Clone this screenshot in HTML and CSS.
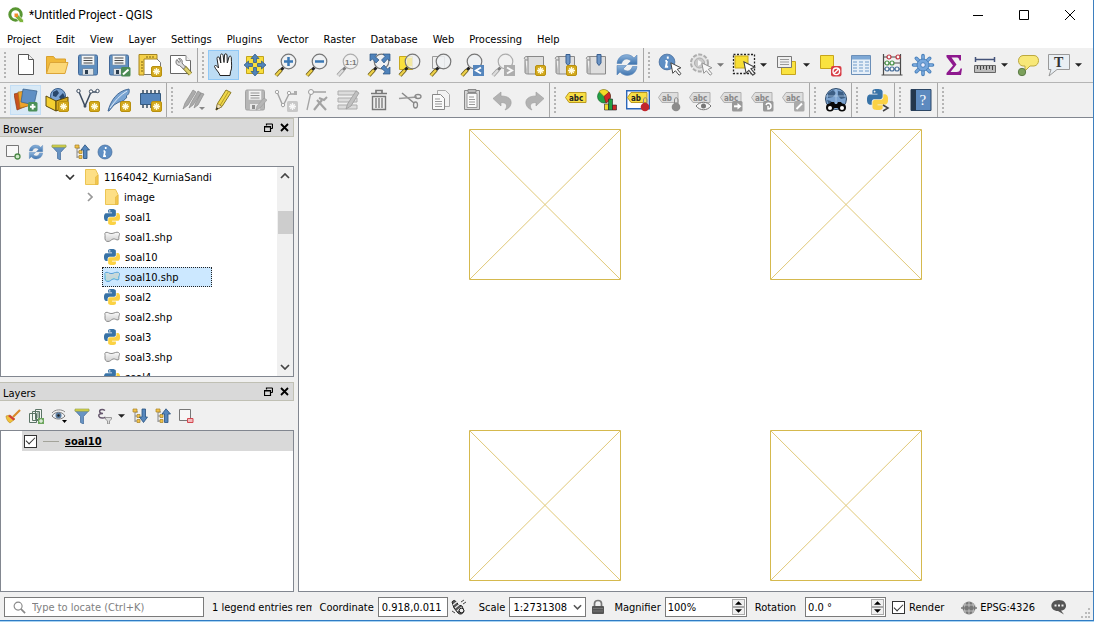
FILE: index.html
```html
<!DOCTYPE html>
<html lang="en">
<head>
<meta charset="utf-8">
<title>*Untitled Project - QGIS</title>
<link rel="stylesheet" href="styles.css">
</head>
<body>
<svg class="sprite" aria-hidden="true">
  <defs>
    <linearGradient id="g-blue" x1="0" y1="0" x2="0" y2="1"><stop offset="0" stop-color="#8db4dc"/><stop offset="1" stop-color="#3f74ae"/></linearGradient>
    <linearGradient id="g-shp" x1="0" y1="0" x2="0" y2="1"><stop offset="0" stop-color="#fafafa"/><stop offset="1" stop-color="#cfcfcf"/></linearGradient>
  </defs>
  <symbol id="b-new" viewBox="0 0 11 11"><rect x=".5" y=".5" width="10" height="10" rx="1.5" fill="#d3a91d" stroke="#b8900f"/><path d="M5.500 2v7M2 5.500h7M3.200 3.200l4.600 4.600M7.800 3.200l-4.600 4.600" stroke="#fffbe0" stroke-width="1.300"/></symbol>
  <symbol id="b-off" viewBox="0 0 11 11"><rect width="11" height="11" rx="1.500" fill="#a9a9a9"/><path d="M5.500 2v7M2 5.500h7M3.200 3.200l4.600 4.600M7.800 3.200l-4.600 4.600" stroke="#fff" stroke-width="1.300"/></symbol>
  <symbol id="lens" viewBox="0 0 24 24"><path d="M9.500 14.500 6 18" stroke="#222" stroke-width="3"/><path d="M7 17l-5 5.500" stroke="#6b5b1a" stroke-width="4"/><path d="M7 17l-5 5.500" stroke="#ecd04a" stroke-width="2.400"/><circle cx="14.500" cy="8.500" r="7.300" fill="#eef1f3" fill-opacity=".85" stroke="#777" stroke-width="1.200"/></symbol>
  <symbol id="floppy" viewBox="0 0 24 24"><rect x="2.500" y="2" width="19" height="20" rx="1.500" fill="#5f8fc0" stroke="#41689a"/><path d="M5.500 2.500h13V12h-13z" fill="#f3f5f6" stroke="#7a8ea3" stroke-width=".6"/><path d="M7.500 5h9M7.500 7.500h9M7.500 10h9" stroke="#444"/><path d="M6.500 15.500h11v6.500h-11z" fill="#dfe3e6" stroke="#54708f" stroke-width=".6"/><path d="M9 17h3v4H9z" fill="#2c3e50"/></symbol>
  <symbol id="roll" viewBox="0 0 24 24"><path d="M4.500 3.500c-2.500 0-3 3-.5 3.500h2v14h15.500V3.500z" fill="#dedede" stroke="#888"/><path d="M6 7V5c0-1-.7-1.500-1.500-1.500M3 7v12.500c0 1.500 3 1.500 3 1.500" fill="#c2c2c2" stroke="#888"/></symbol>
  <symbol id="mark" viewBox="0 0 6 12"><path d="M1 .5h4v8.500l-2 2.500-2-2.500z" fill="#6b94c4" stroke="#385f91"/></symbol>
  <symbol id="pointer" viewBox="0 0 12 14"><path d="M.8.8l2 10.500 2.600-2.600 3.700 4.500 1.900-1.500-3.700-4.400 3.600-1.500z" fill="#fff" stroke="#444"/></symbol>
  <symbol id="python" viewBox="0 0 24 24"><path fill="#3873a7" d="M14.250.18l.9.2.73.26.59.3.45.32.34.34.25.34.16.33.1.3.04.26.02.2-.01.13V8.500l-.05.63-.13.55-.21.46-.26.38-.3.31-.33.25-.35.19-.35.14-.33.1-.3.07-.26.04-.21.02H8.770l-.69.05-.59.14-.5.22-.41.27-.33.32-.27.35-.2.36-.15.37-.1.35-.07.32-.04.27-.02.21v3.060H3.170l-.21-.03-.28-.07-.32-.12-.35-.18-.36-.26-.36-.36-.35-.46-.32-.59-.28-.73-.21-.88-.14-1.050-.05-1.230.06-1.220.16-1.040.24-.87.32-.71.36-.57.4-.44.42-.33.42-.24.4-.16.36-.1.32-.05.24-.01h.16l.06.01h8.160v-.83H6.180l-.01-2.750-.02-.37.05-.34.11-.31.17-.28.25-.26.31-.23.38-.2.44-.18.51-.15.58-.12.64-.1.71-.06.77-.04.84-.02 1.270.05zm-6.300 1.980l-.23.33-.08.41.08.41.23.34.33.22.41.09.41-.09.33-.22.23-.34.08-.41-.08-.41-.23-.33-.33-.22-.41-.09-.41.09z"/><path fill="#fbd244" d="M21.100 6.110l.28.06.32.12.35.18.36.27.36.35.35.47.32.59.28.73.21.88.14 1.040.05 1.230-.06 1.230-.16 1.040-.24.86-.32.71-.36.57-.4.45-.42.33-.42.24-.4.16-.36.09-.32.05-.24.02-.16-.01h-8.220v.82h5.840l.01 2.760.02.36-.05.34-.11.31-.17.29-.25.25-.31.24-.38.2-.44.17-.51.15-.58.13-.64.09-.71.07-.77.04-.84.01-1.270-.04-1.070-.14-.9-.2-.73-.25-.59-.3-.45-.33-.34-.34-.25-.34-.16-.33-.1-.3-.04-.25-.02-.2.01-.13v-5.340l.05-.64.13-.54.21-.46.26-.38.3-.32.33-.24.35-.2.35-.14.33-.1.3-.06.26-.04.21-.02.13-.01h5.840l.69-.05.59-.14.5-.21.41-.28.33-.32.27-.35.2-.36.15-.36.1-.35.07-.32.04-.28.02-.21V6.070h2.090l.14.01z"/></symbol>
  <symbol id="shp" viewBox="0 0 16 12"><path d="M1.500 1.500C4 .5 5 3 8 2.500S12.500.5 14.500 1.500s.5 3 .3 4.500.7 2.500-.8 2.900-3-1.500-5-.9-2.500 2.500-5 2.500S.7 8.500 1 6 .3 2.500 1.500 1.500z" fill="url(#g-shp)" stroke="#8c8c8c"/></symbol>
  <symbol id="folder" viewBox="0 0 14 16"><path d="M.5.5h10l2.500 5v10H.5z" fill="#fddf85" stroke="#ecc552"/><path d="M10.500 15.500V8l2.500-2v9.500z" fill="#f2c64d" stroke="#e2b63e" stroke-width=".6"/></symbol>
  <symbol id="refresh" viewBox="0 0 24 24"><path d="M2 10.500C3 1 14-1 19 5l3-3v9.500h-9.500L16 8C12 4.500 8 6 6.500 10.500z" fill="url(#g-blue)" stroke="#5a86b8" stroke-width=".6"/><path d="M22 13.500C21 23 10 25 5 19l-3 3v-9.500h9.500L8 16c4 3.500 8 2 9.500-2.500z" fill="url(#g-blue)" stroke="#5a86b8" stroke-width=".6"/></symbol>
  <symbol id="funnel" viewBox="0 0 16 16"><path d="M1 2.500h14l-5.500 6V16l-3-1.500v-6z" fill="#6793c3" stroke="#41689a" stroke-width=".7"/><path d="M1 1h14v2.200H1z" fill="#d8d44e" stroke="#8d9a3e" stroke-width=".6"/></symbol>
  <symbol id="tree-up" viewBox="0 0 16 16"><path d="M3 2v12M3 4h3M3 8h3M3 13h3" stroke="#888" fill="none"/><path d="M1 1h4v3H1zM5 6.500h3v3H5zM5 11.500h3v3H5z" fill="#f2c24b" stroke="#a88224" stroke-width=".7"/><path d="M11 .8 15.500 6H13v8.500H9.500V6H7z" fill="#5687bd" stroke="#27517f" stroke-width=".8"/></symbol>
  <symbol id="tree-down" viewBox="0 0 16 16"><path d="M3 2v12M3 4h3M3 8h3M3 13h3" stroke="#888" fill="none"/><path d="M1 1h4v3H1zM5 6.500h3v3H5zM5 11.500h3v3H5z" fill="#f2c24b" stroke="#a88224" stroke-width=".7"/><path d="M11.500 14.500 15.500 9H13.500V1H10v8H7.500z" fill="#5687bd" stroke="#27517f" stroke-width=".8"/></symbol>
  <symbol id="info" viewBox="0 0 16 16"><circle cx="8" cy="8" r="7" fill="#5f8fc4" stroke="#41689a" stroke-width=".7"/><path d="M8.700 3v2M8 7l-1 5.200h2M6.500 7H8" stroke="#fff" stroke-width="1.700" fill="none"/></symbol>
  <symbol id="tag" viewBox="0 0 24 24"><path d="M1.500 7.500 5 2.500h17v10H5z" class="tag-shape"/><text x="5" y="10.500" class="tag-text">abc</text></symbol>
  <symbol id="tagab" viewBox="0 0 24 24"><path d="M1.500 7.500 5 2.500h16v10H5z" class="tag-shape"/><text x="5" y="10.500" class="tag-text">ab</text></symbol>
  <symbol id="pin" viewBox="0 0 10 16"><path d="M3.500 8V4c0-3 3.500-3 3.500 0v4" fill="none" stroke="#888"/><circle cx="5" cy="11" r="4.300" fill="currentColor"/></symbol>
  <symbol id="undo" viewBox="0 0 24 24"><path d="M2 10.500 10 4v4c7 0 11 3 10 8-.7 3-3 5-6 6 3-4 2-7.500-4-7.500V18z" fill="#b2b2b2" stroke="#9c9c9c" stroke-width=".6"/></symbol>
  <symbol id="float" viewBox="0 0 9 9"><path d="M2.500 1h6M2.500 .5v2M8.500 1v4.500M6.500 5.500h2M.5 3.500h6v5H.5zM.5 4h6" fill="none" stroke="#000" stroke-width="1.200"/></symbol>
  <symbol id="x" viewBox="0 0 9 9"><path d="M1 1l7 7M8 1 1 8" stroke="#000" stroke-width="1.800"/></symbol>
  <symbol id="chev" viewBox="0 0 10 6"><path d="M1 1l4 4 4-4" fill="none" stroke="currentColor" stroke-width="1.700"/></symbol>
  <symbol id="tri" viewBox="0 0 8 4"><path d="M0 0h8L4 4z" fill="currentColor"/></symbol>
</svg>

<div class="window">
  <header class="titlebar">
    <svg class="logo" viewBox="0 0 16 16"><circle cx="7.500" cy="7.500" r="5.700" fill="none" stroke="#589632" stroke-width="3"/><path d="M7.500 7.500h2.500l5.500 5.500v2.500H12L7.500 10.500z" fill="#7db53c" stroke="#fff" stroke-width=".7"/><path d="M6.500 6.500h3.500v3.500H6.500z" fill="#ee8f2b"/></svg>
    <h1>*Untitled Project - QGIS</h1>
    <div class="winbtns">
      <button aria-label="Minimize"><svg viewBox="0 0 12 12"><path d="M1 6.500h10" stroke="#000"/></svg></button>
      <button aria-label="Maximize"><svg viewBox="0 0 12 12"><path d="M1.500 1.500h9v9h-9z" fill="none" stroke="#000"/></svg></button>
      <button aria-label="Close"><svg viewBox="0 0 12 12"><path d="M1 1l10 10M11 1 1 11" stroke="#000"/></svg></button>
    </div>
  </header>
  <nav class="menubar">
    <button>Project</button><button>Edit</button><button>View</button><button>Layer</button><button>Settings</button><button>Plugins</button><button>Vector</button><button>Raster</button><button>Database</button><button>Web</button><button>Processing</button><button>Help</button>
  </nav>

  <div class="toolrow">
    <div class="group">
      <button aria-label="New project"><svg viewBox="0 0 24 24"><path d="M4.500 1.500h10l5 5v15h-15z" fill="#fff" stroke="#555"/><path d="M14.500 1.500v5h5" fill="#eee" stroke="#555"/></svg></button>
      <button aria-label="Open"><svg viewBox="0 0 24 24"><path d="M1.500 20.500v-17h7l2 2.500h10v4" fill="#f0b93a" stroke="#d9a02e"/><path d="M1.500 20.500 5 9.500h18l-3 11z" fill="#fcd878" stroke="#dca538"/></svg></button>
      <button aria-label="Save"><svg viewBox="0 0 24 24"><use href="#floppy"/></svg></button>
      <button aria-label="Save as"><svg viewBox="0 0 24 24"><use href="#floppy"/><rect x="14" y="14" width="9.500" height="9.500" rx="1.500" fill="#4b8a54"/><path d="M16 21.500l5.500-5" stroke="#fff" stroke-width="2"/></svg></button>
      <button aria-label="New print layout"><svg viewBox="0 0 24 24"><path d="M4.500 4.500h13l5 5v12h-18z" fill="#fff" stroke="#777"/><path d="M1 1.500h18v4.500H6v16H1z" fill="#f4d04a" stroke="#a58420"/><path d="M9 3v2M12 3v2M15 3v2M3 9h2M3 12h2M3 15h2M3 18h2" stroke="#7c6210"/><use href="#b-new" x="13" y="13" width="11" height="11"/></svg></button>
      <button aria-label="Layout manager"><svg viewBox="0 0 24 24"><path d="M1.500 2.500h15l5 5v13h-20z" fill="#fff" stroke="#666"/><path d="M17 2.500v5h5" fill="#eee" stroke="#888"/><path d="M15 14l6.500 7" stroke="#7d7225" stroke-width="4.500"/><path d="M15 14l6.500 7" stroke="#ddd06c" stroke-width="2.800"/><path d="M8 6.500c-2 2-1 6 2.500 6l4 3.500 2-2-3.500-4c1-3-1.500-5-3.500-4.500l2 2.500-1.500 1.500z" fill="#ddd" stroke="#555" stroke-width=".8"/></svg></button>
    </div>
    <div class="group">
      <button class="on" aria-label="Pan map"><svg viewBox="0 0 24 24"><path d="M8 22.500c-.5-3-4.500-6-5.500-9 0-1.500 2-1.500 4 1.500L5 5.500C4.800 3.500 7 3.200 7.500 5l1.300 5L8.500 2.500c0-2 2.300-2 2.600 0l.9 7L12.500 2c.2-1.700 2.300-1.600 2.500 0l.3 8L17 4c.5-1.500 2.500-1 2.300.8-.1 4 1.200 11-.8 14l-.5 3.700z" fill="#fff" stroke="#222"/></svg></button>
      <button aria-label="Pan to selection"><svg viewBox="0 0 24 24"><path d="M3.500 3.500h17v17h-17z" fill="#f9de3c" stroke="#c2a41c"/><path d="M12 1l4 4.500h-2.500v4h-3v-4H8zM12 23l4-4.500h-2.500v-4h-3v4H8zM1 12l4.500-4v2.500h4v3h-4V16zM23 12l-4.500-4v2.500h-4v3h4V16z" fill="#4f83bb" stroke="#2d5582" stroke-width=".7"/></svg></button>
      <button aria-label="Zoom in"><svg viewBox="0 0 24 24"><use href="#lens"/><path d="M14.500 4v9M10 8.500h9" stroke="#3b78b5" stroke-width="2.500"/></svg></button>
      <button aria-label="Zoom out"><svg viewBox="0 0 24 24"><use href="#lens"/><path d="M10 8.500h9" stroke="#3b78b5" stroke-width="2.500"/></svg></button>
      <button aria-label="Zoom to native resolution" disabled><svg viewBox="0 0 24 24"><g class="off"><use href="#lens"/></g><text x="9" y="11.500" class="ratio">1:1</text></svg></button>
      <button aria-label="Zoom full"><svg viewBox="0 0 24 24"><use href="#lens"/><path d="M3 1h7L8 3.500l4 3.500-3 3-3.500-4L3 8zM23 1h-7l2 2.500L14.500 7l2.500 3 3.500-4L23 8zM23 21h-7l2-2.500-4-3.500 3-3 3.500 4 2.500-2z" fill="#4f83bb" stroke="#2d5582" stroke-width=".7"/></svg></button>
      <button aria-label="Zoom to selection"><svg viewBox="0 0 24 24"><path d="M1.500 3.500h13v13h-13z" fill="#f9e03c" stroke="#c7a91f"/><use href="#lens"/><path d="M9 5h5v8H9z" fill="#f4e37f" opacity=".6"/></svg></button>
      <button aria-label="Zoom to layer"><svg viewBox="0 0 24 24"><path d="M3.500 3.500h12v12h-12z" fill="#eee" stroke="#999"/><use href="#lens"/></svg></button>
      <button aria-label="Zoom last"><svg viewBox="0 0 24 24"><use href="#lens"/><path d="M13 12h11v11H13z" fill="#5586bd"/><path d="M21 14.500l-5 3 5 3" fill="none" stroke="#fff" stroke-width="2"/></svg></button>
      <button aria-label="Zoom next" disabled><svg class="off" viewBox="0 0 24 24"><use href="#lens"/><path d="M13 12h11v11H13z" fill="#777"/><path d="M16 14.500l5 3-5 3" fill="none" stroke="#fff" stroke-width="2"/></svg></button>
      <button aria-label="New map view"><svg viewBox="0 0 24 24"><use href="#roll"/><use href="#b-new" x="13" y="12" width="11" height="11"/></svg></button>
      <button aria-label="New bookmark"><svg viewBox="0 0 24 24"><use href="#roll"/><use href="#mark" x="12" y="1" width="6" height="12"/><use href="#b-new" x="13" y="12" width="11" height="11"/></svg></button>
      <button aria-label="Show bookmarks"><svg viewBox="0 0 24 24"><use href="#roll"/><use href="#mark" x="12" y="1" width="6" height="12"/></svg></button>
      <button aria-label="Refresh"><svg viewBox="0 0 24 24"><use href="#refresh"/></svg></button>
    </div>
    <div class="group last">
      <button aria-label="Identify features"><svg viewBox="0 0 24 24"><use href="#info" width="18" height="18"/><use href="#pointer" x="12" y="9" width="12" height="14"/></svg></button>
      <button class="wide" aria-label="Run feature action" disabled><svg class="off" viewBox="0 0 24 24"><circle cx="10.500" cy="10" r="8.500" fill="#ddd" stroke="#777" stroke-width="2" stroke-dasharray="4 1.500"/><circle cx="10.500" cy="10" r="5" fill="#aaa" stroke="#777"/><path d="M9 7l5 3-5 3z" fill="#fff"/><use href="#pointer" x="12" y="9" width="12" height="14"/></svg><svg class="tri"><use href="#tri"/></svg></button>
      <button class="wide" aria-label="Select features"><svg viewBox="0 0 24 24"><path d="M1.500 1.500h21v19h-21z" fill="none" stroke="#222" stroke-width="1.300" stroke-dasharray="2 1.500"/><path d="M3 3h13v12H3z" fill="#f7de35" stroke="#c9aa1c"/><use href="#pointer" x="11" y="8" width="13" height="15"/></svg><svg class="tri"><use href="#tri"/></svg></button>
      <button class="wide" aria-label="Select by value"><svg viewBox="0 0 24 24"><path d="M6.500 8.500h14v13h-14z" fill="#fae33f" stroke="#c7a51c"/><path d="M2.500 3.500h14v11h-14z" fill="#f0f0f0" stroke="#777"/><path d="M5 6.500h9M5 9h9M5 11.500h9" stroke="#999"/></svg><svg class="tri"><use href="#tri"/></svg></button>
      <button aria-label="Deselect features"><svg viewBox="0 0 24 24"><path d="M2.500 2.500h13v13h-13z" fill="#fae33f" stroke="#c7a51c"/><rect x="13" y="13" width="10.500" height="10.500" rx="2" fill="#d83c45"/><circle cx="18.300" cy="18.300" r="3.300" fill="none" stroke="#fff" stroke-width="1.400"/><path d="M16 20.500l4.500-4.500" stroke="#fff" stroke-width="1.400"/></svg></button>
      <button aria-label="Attribute table"><svg viewBox="0 0 24 24"><path d="M2.500 2.500h19v19h-19z" fill="#e6eff8" stroke="#6b8fb8"/><path d="M3 3h18v3.500H3z" fill="#7ea8d5"/><path d="M4 9h4M4 12h4M4 15h4M4 18h4M10 9h4M10 12h4M10 15h4M10 18h4M16 9h4M16 12h4M16 15h4M16 18h4" stroke="#6f9bca"/></svg></button>
      <button aria-label="Field calculator"><svg viewBox="0 0 24 24"><path d="M3.500 1v21M20.500 1v21M3 4h18M3 10h18M3 16h18M1.500 22h21" stroke="#4b4b4b" stroke-width="1.200"/><g fill="#f8f8f8" stroke-width="1.200"><g stroke="#c03540"><circle cx="9" cy="4" r="2"/><circle cx="18" cy="4" r="2"/></g><g stroke="#499248"><circle cx="7" cy="10" r="2"/><circle cx="12" cy="10" r="2"/></g><g stroke="#486f9b"><circle cx="7" cy="16" r="2"/><circle cx="12" cy="16" r="2"/><circle cx="17" cy="16" r="2"/></g></g></svg></button>
      <button aria-label="Processing toolbox"><svg viewBox="0 0 24 24"><path d="M12 2.500v19M2.500 12h19M5.300 5.300l13.400 13.400M18.700 5.300 5.300 18.700" stroke="#4c82bb" stroke-width="3.600" stroke-linecap="round"/><path d="M12 3v18M3 12h18M5.500 5.500l13 13M18.500 5.500l-13 13" stroke="#75a6dc" stroke-width="2" stroke-linecap="round"/><circle cx="12" cy="12" r="6" fill="#75a6dc" stroke="#4c82bb"/><circle cx="12" cy="12" r="2.300" fill="#eef" stroke="#4c82bb"/></svg></button>
      <button aria-label="Statistical summary"><svg viewBox="0 0 24 24"><path d="M4.500 2h14.500v5.500h-1.500c-.5-2.500-1.500-3-3.500-3H9.500l5 7-6 7.500h6c2.500 0 3.500-1 4-3.500H20L19 22H4.500v-2L11 12.500 4.500 4z" fill="#8e188e"/></svg></button>
      <button class="wide" aria-label="Measure"><svg viewBox="0 0 24 24"><path d="M2 6.500h20M2.500 4v5M21.500 4v5" stroke="#435278" stroke-width="1.500"/><path d="M1.500 12.500h21v7h-21z" fill="#bbb" stroke="#666"/><path d="M4.500 13v3M7.500 13v4M10.500 13v3M13.500 13v4M16.500 13v3M19.500 13v4" stroke="#444"/></svg><svg class="tri"><use href="#tri"/></svg></button>
      <button aria-label="Map tips"><svg viewBox="0 0 24 24"><path d="M7 2.500h11c6 0 6 10 0 10.500h-4L9 18v-5H7C1 12.500 1 3 7 2.500z" fill="#f8e878" stroke="#bca93f"/><circle cx="6" cy="19" r="3.700" fill="#7ba05b" stroke="#5d7c48"/></svg></button>
      <button class="wide" aria-label="Text annotation"><svg viewBox="0 0 24 24"><path d="M1.500 1.500h21v15H10L2 23l2-6.500H1.500z" fill="#e9eff4" stroke="#999"/><text x="7" y="14" class="note">T</text></svg><svg class="tri"><use href="#tri"/></svg></button>
    </div>
  </div>

  <div class="toolrow">
    <div class="group">
      <button class="hover" aria-label="Data source manager"><svg viewBox="0 0 24 24"><path d="M0 6l12-3 3 14-12 5z" fill="#c9521f" stroke="#8c3a16" stroke-width=".7"/><path d="M4 4l12-1 2 14-12 3z" fill="#eda32b" stroke="#a46f18" stroke-width=".7"/><path d="M9 1l14 2-3 14-13-3z" fill="#5f8fc4" stroke="#345b87" stroke-width=".7"/><rect x="14" y="14" width="9.500" height="9.500" rx="1.500" fill="#4b9058"/><path d="M18.700 16v5.500M16 18.700h5.500" stroke="#fff" stroke-width="2"/></svg></button>
      <button aria-label="New GeoPackage layer"><svg viewBox="0 0 24 24"><circle cx="13" cy="8" r="7.500" fill="#7ba3d2" stroke="#375d8a"/><path d="M8 4l4-2 2 3-3 4-3-1zM14 9l4-4 2 4-3 4z" fill="#28476c"/><path d="M1 8l10 5v10L1 18z" fill="#f4cf30" stroke="#5c4a0c"/><path d="M11 13l12-4v9l-12 5z" fill="#d6a91c" stroke="#5c4a0c"/><use href="#b-new" x="13" y="13" width="11" height="11"/></svg></button>
      <button aria-label="New shapefile layer"><svg viewBox="0 0 24 24"><path d="M3 4l6 14 6-14h6" fill="none" stroke="#3d4c60" stroke-width="1.500"/><g fill="#fff" stroke="#3d4c60"><circle cx="2.500" cy="3" r="1.700"/><circle cx="15" cy="3.500" r="1.700"/><circle cx="21.500" cy="3" r="1.700"/></g><circle cx="9" cy="18" r="1.500" fill="#3d4c60"/><use href="#b-new" x="13" y="13" width="11" height="11"/></svg></button>
      <button aria-label="New SpatiaLite layer"><svg viewBox="0 0 24 24"><path d="M1 23C4 12 10 3 22 1c1 4-1 6-3 7l1 1c-2 3-5 5-8 5l-5 3-5 6z" fill="#79a4d2" stroke="#3a618f" stroke-width=".9"/><path d="M3 20C8 13 13 7 20 3" fill="none" stroke="#e0ebf6"/><use href="#b-new" x="13" y="13" width="11" height="11"/></svg></button>
      <button aria-label="New memory layer"><svg viewBox="0 0 24 24"><path d="M5 2v18M9 2v18M13 2v18M17 2v18M21 2v18" stroke="#34495e" stroke-width="1.500"/><path d="M2.500 5.500h20v11h-20z" fill="#5585bb" stroke="#34597f"/><use href="#b-new" x="13" y="13" width="11" height="11"/></svg></button>
    </div>
    <div class="group tight">
      <button aria-label="Current edits" disabled><svg viewBox="0 0 24 24"><path d="M2 21l2-6 8-13 3 2-8 13zM8 20l2-5 7-12 3 2-8 12zM13 20l1.500-5L20 5l3 1-6 11z" fill="#ababab" stroke="#8c8c8c" stroke-width=".7"/><path d="M18 19h6l-3 3z" fill="#888"/></svg></button>
      <button aria-label="Toggle editing"><svg viewBox="0 0 24 24"><path d="M4 22l1.500-6.500L14 2l5 2.500-9 14z" fill="#f0d84a" stroke="#8b7b25"/><path d="M8 17.500 16.500 3.500" stroke="#b59b28"/><path d="M4 22l1.500-6.500 4.500 3z" fill="#eedfb8" stroke="#76601e" stroke-width=".6"/><path d="M4 22l.6-2.700 1.900 1.200z" fill="#222"/></svg></button>
      <button aria-label="Save layer edits" disabled><svg class="off" viewBox="0 0 24 24"><use href="#floppy"/><path d="M13 22l1-4 7-8 3 2-7 8z" fill="#888" stroke="#555" stroke-width=".6"/></svg></button>
      <button aria-label="Add feature" disabled><svg class="off" viewBox="0 0 24 24"><path d="M3 4l6 14 6-12h6" fill="none" stroke="#666" stroke-width="1.400"/><g fill="#fff" stroke="#666"><circle cx="3" cy="4" r="1.700"/><circle cx="15" cy="5" r="1.700"/><circle cx="9" cy="17" r="1.700"/></g><path d="M20 3h3v4h-3z" fill="#777"/><use href="#b-off" x="13" y="13" width="11" height="11"/></svg></button>
      <button aria-label="Vertex tool" disabled><svg class="off" viewBox="0 0 24 24"><path d="M2 22 6 4h15" fill="none" stroke="#666" stroke-width="1.300"/><circle cx="6" cy="4" r="2.500" fill="#fff" stroke="#555"/><path d="M9 22l8-10M12 12l9 10" stroke="#666" stroke-width="2.200"/><path d="M14 10l5 2 3-3" fill="none" stroke="#666" stroke-width="2"/></svg></button>
      <button aria-label="Modify attributes" disabled><svg class="off" viewBox="0 0 24 24"><path d="M2 3h19v4H2zM2 10h19v4H2zM2 17h19v4H2z" fill="#ccc" stroke="#777"/><path d="M10 21l1.500-5L20 3l3 2-8 13z" fill="#999" stroke="#555" stroke-width=".8"/></svg></button>
      <button aria-label="Delete selected" disabled><svg viewBox="0 0 24 24"><path d="M5.500 8.500h13v13h-13z" fill="#eee" stroke="#777" stroke-width="1.400"/><path d="M9 10v10M12 10v10M15 10v10" stroke="#777" stroke-width="1.300"/><path d="M4 5.500h16M9 5V2.500h6V5" fill="none" stroke="#777" stroke-width="1.700"/></svg></button>
      <button aria-label="Cut features" disabled><svg viewBox="0 0 24 24"><path d="M4 5l12 10" stroke="#888" stroke-width="1.500"/><path d="M1 10.500 19 9" stroke="#999" stroke-width="1.700"/><ellipse cx="20" cy="8.500" rx="3" ry="2" fill="none" stroke="#888" stroke-width="1.300"/><ellipse cx="17.500" cy="17" rx="2" ry="3" fill="none" stroke="#888" stroke-width="1.300"/></svg></button>
      <button aria-label="Copy features" disabled><svg viewBox="0 0 24 24"><path d="M8.500 2.500h8l4 4v12h-12z" fill="#f3f3f3" stroke="#aaa"/><path d="M3.500 6.500h8l4 4v11h-12z" fill="#fafafa" stroke="#888"/><path d="M6 11h5M6 13.500h7M6 16h7M6 18.500h7" stroke="#999"/></svg></button>
      <button aria-label="Paste features" disabled><svg viewBox="0 0 24 24"><path d="M4.500 2.500h15v19h-15z" fill="#d8d8d8" stroke="#888"/><path d="M7 5.500h10v14H7z" fill="#fafafa" stroke="#999"/><path d="M8 1.500h8v3H8z" fill="#bbb" stroke="#888"/><path d="M9 9h5M9 11.500h6M9 14h6M9 16.500h6" stroke="#999"/></svg></button>
      <button aria-label="Undo" disabled><svg viewBox="0 0 24 24"><use href="#undo"/></svg></button>
      <button aria-label="Redo" disabled><svg class="flip" viewBox="0 0 24 24"><use href="#undo"/></svg></button>
    </div>
    <div class="group">
      <button aria-label="Layer labeling options"><svg viewBox="0 0 24 24" class="yellow"><use href="#tag" y="2"/></svg></button>
      <button aria-label="Layer diagram options"><svg viewBox="0 0 24 24"><circle cx="9" cy="8.500" r="6.500" fill="#22a045" stroke="#0d5a20" stroke-width=".6"/><path d="M9 8.500 4 3.500c3-3 8-2.500 10 1z" fill="#f3db28" stroke="#7a6a0c" stroke-width=".5"/><path d="M9 8.500l5-4.500c3 4 1 9-3 11z" fill="#cf2727" stroke="#7c1111" stroke-width=".5"/><path d="M9.500 16h4v6h-4z" fill="#f1d92b" stroke="#222" stroke-width=".6"/><path d="M13.500 11h4v11h-4z" fill="#22a045" stroke="#222" stroke-width=".6"/><path d="M17.500 17h4v5h-4z" fill="#cf2727" stroke="#222" stroke-width=".6"/></svg></button>
      <button aria-label="Highlight pinned labels"><svg viewBox="0 0 24 24" class="yellow"><path d="M.7 2.700h22.600v18H.7z" fill="#fff" stroke="#2b66ba" stroke-width="1.400"/><use href="#tagab" y="2"/><use href="#pin" class="red" x="14" y="8" width="10" height="16"/></svg></button>
      <button aria-label="Pin labels" disabled><svg viewBox="0 0 24 24" class="gray"><use href="#tagab" y="2"/><use href="#pin" x="14" y="8" width="10" height="16"/></svg></button>
      <button aria-label="Show hidden labels" disabled><svg viewBox="0 0 24 24" class="gray"><use href="#tag" y="2"/><path d="M8 18c4-5 11-5 15 0-4 5-11 5-15 0z" fill="#f4f4f4" stroke="#777"/><circle cx="15.500" cy="18" r="2.500" fill="#777"/></svg></button>
      <button aria-label="Move label" disabled><svg viewBox="0 0 24 24" class="gray"><use href="#tag" y="2"/><rect x="13" y="13" width="10.500" height="10.500" rx="1.500" fill="#999"/><path d="M15 18.300h4" stroke="#fff" stroke-width="2"/><path d="M18.500 15l4 3.300-4 3.300z" fill="#fff"/></svg></button>
      <button aria-label="Rotate label" disabled><svg viewBox="0 0 24 24" class="gray"><use href="#tag" y="2"/><rect x="13" y="13" width="10.500" height="10.500" rx="1.500" fill="#999"/><path d="M16 17c1-3 5-2 5 1s-3 3-3 3v-3" fill="none" stroke="#fff" stroke-width="1.500"/></svg></button>
      <button aria-label="Change label" disabled><svg viewBox="0 0 24 24" class="gray"><use href="#tag" y="2"/><rect x="13" y="13" width="10.500" height="10.500" rx="1.500" fill="#aaa"/><path d="M15.500 21l5.500-5.500" stroke="#fff" stroke-width="2"/></svg></button>
    </div>
    <div class="group tight">
      <button aria-label="MetaSearch"><svg viewBox="0 0 24 24"><circle cx="12" cy="11" r="10.500" fill="#7aa2cf" stroke="#314d6b"/><path d="M4 5l5-3 3 3-3 4-5 1zM14 3l5 1 2 6-4 1-3-3zM3 12l4 1 2 4-4 0z" fill="#3d5f85"/><path d="M2 8h20M12 1v20" stroke="#b6d0ea" stroke-width=".7"/><path d="M7 14h3l1 2h2l1-2h3l4 6H3z" fill="#090909"/><circle cx="6" cy="19.500" r="4" fill="#090909"/><circle cx="18" cy="19.500" r="4" fill="#090909"/><circle cx="6" cy="20" r="2" fill="#fff"/><circle cx="18" cy="20" r="2" fill="#fff"/></svg></button>
    </div>
    <div class="group">
      <button aria-label="Python console"><svg viewBox="0 0 24 24"><use href="#python" x="1" y="1" width="21" height="21"/><path d="M17 17l5 3-5 3" fill="none" stroke="#444" stroke-width="1.500"/></svg></button>
    </div>
    <div class="group">
      <button aria-label="Help contents"><svg viewBox="0 0 24 24"><path d="M2 1.500h20v21H2z" fill="#5d8abf" stroke="#2c4766"/><path d="M2 1.500h5v21H2z" fill="#24374d"/><text x="10.500" y="17" class="help">?</text></svg></button>
    </div>
    <div class="group last"></div>
  </div>

  <main class="work">
    <aside class="docks">
      <section class="dock browser">
        <div class="dock-title"><h2>Browser</h2><button aria-label="Float browser"><svg><use href="#float"/></svg></button><button aria-label="Close browser"><svg><use href="#x"/></svg></button></div>
        <div class="dock-tools">
          <button aria-label="Add layers"><svg viewBox="0 0 16 16"><path d="M1.500 1.500h12v11h-12z" fill="#f8f8f8" stroke="#777"/><circle cx="12.500" cy="12.500" r="2.500" fill="#cfe8c9" stroke="#4c8a48" stroke-width="1.300"/></svg></button>
          <button aria-label="Refresh browser"><svg><use href="#refresh"/></svg></button>
          <button aria-label="Filter browser"><svg><use href="#funnel"/></svg></button>
          <button aria-label="Collapse all"><svg><use href="#tree-up"/></svg></button>
          <button aria-label="Properties"><svg><use href="#info"/></svg></button>
        </div>
        <div class="frame tree">
          <ul>
            <li class="root"><svg class="chev"><use href="#chev"/></svg><svg class="fold"><use href="#folder"/></svg><span>1164042_KurniaSandi</span></li>
            <li class="sub"><svg class="chev closed"><use href="#chev"/></svg><svg class="fold"><use href="#folder"/></svg><span>image</span></li>
            <li><svg><use href="#python"/></svg><span>soal1</span></li>
            <li><svg><use href="#shp"/></svg><span>soal1.shp</span></li>
            <li><svg><use href="#python"/></svg><span>soal10</span></li>
            <li class="selected"><svg><use href="#shp"/></svg><span>soal10.shp</span></li>
            <li><svg><use href="#python"/></svg><span>soal2</span></li>
            <li><svg><use href="#shp"/></svg><span>soal2.shp</span></li>
            <li><svg><use href="#python"/></svg><span>soal3</span></li>
            <li><svg><use href="#shp"/></svg><span>soal3.shp</span></li>
            <li><svg><use href="#python"/></svg><span>soal4</span></li>
          </ul>
          <div class="scrollbar"><svg class="up"><use href="#chev"/></svg><i></i><svg><use href="#chev"/></svg></div>
        </div>
      </section>
      <section class="dock layers">
        <div class="dock-title"><h2>Layers</h2><button aria-label="Float layers"><svg><use href="#float"/></svg></button><button aria-label="Close layers"><svg><use href="#x"/></svg></button></div>
        <div class="dock-tools">
          <button aria-label="Layer styling"><svg viewBox="0 0 16 16"><path d="M15 2 8 9" stroke="#d88a2a" stroke-width="2.200"/><path d="M1 8l4-1 5 4-5 4c-2-1-4-4-4-7z" fill="#f0c23c" stroke="#b88a20" stroke-width=".6"/><path d="M5 7l5 4-1.500 1.500L3 8z" fill="#d33b3b"/></svg></button>
          <button aria-label="Add group"><svg viewBox="0 0 16 16"><path d="M1.500 5.500h7v9h-7zM4.500 3.500h7v9h-7zM7.500 1.500h6v10h-6z" fill="#f3f6f3" stroke="#5b7466"/><path d="M10 4v6" stroke="#5b7466"/><path d="M10 10h6v6h-6z" fill="#6da65e"/><path d="M13 11v4M11 13h4" stroke="#fff"/></svg></button>
          <button aria-label="Map themes"><svg viewBox="0 0 16 16"><path d="M1 8c3-5 10-5 13 0-3 4-10 4-13 0z" fill="#eef2f6" stroke="#777"/><circle cx="7.500" cy="7.500" r="3" fill="#56789c"/><circle cx="7.500" cy="7.500" r="1.200" fill="#222"/><path d="M1 5c3-4 10-4 13-1" fill="none" stroke="#888"/><path d="M11 12h5l-2.500 3z"/></svg></button>
          <button aria-label="Filter legend"><svg><use href="#funnel"/></svg></button>
          <button class="wide" aria-label="Filter by expression"><svg viewBox="0 0 16 16"><path d="M8 2.500C5 .5 1.500 2 3 4.500c.5.800 1.500 1 3 1-3-.2-5 1-4 3s5 2 6.500.5" fill="none" stroke="#65566c" stroke-width="1.500"/><path d="M8.500 9.500h6v1.500l-2 2V16h-2v-3l-2-2z" fill="#ddd" stroke="#999"/></svg><svg class="tri"><use href="#tri"/></svg></button>
          <button aria-label="Expand all"><svg><use href="#tree-down"/></svg></button>
          <button aria-label="Collapse layers"><svg><use href="#tree-up"/></svg></button>
          <button aria-label="Remove layer"><svg viewBox="0 0 16 16"><path d="M1.500 1.500h11v11h-11z" fill="#f6f6f6" stroke="#777"/><path d="M9.500 10.500h5.500v4H9.500z" fill="#f4b9bc" stroke="#d2474f"/></svg></button>
        </div>
        <div class="frame list">
          <label class="layer"><input type="checkbox" class="check" checked><i></i><span>soal10</span></label>
        </div>
      </section>
    </aside>
    <div class="canvas">
      <svg>
        <g class="features">
          <path class="edge" d="M170.500 11.500h151v150h-151zM471.500 11.500h151v150h-151zM170.500 312.500h151v150h-151zM471.500 312.500h151v150h-151z"/>
          <path class="cross" d="M170.500 11.500l151 150m0-150l-151 150M471.500 11.500l151 150m0-150l-151 150M170.500 312.500l151 150m0-150l-151 150M471.500 312.500l151 150m0-150l-151 150"/>
        </g>
      </svg>
    </div>
  </main>

  <footer class="status">
    <div class="locate"><svg viewBox="0 0 14 14"><circle cx="5.500" cy="5.500" r="4.300" fill="none" stroke="#888" stroke-width="1.200"/><path d="M8.500 8.500 13 13" stroke="#888" stroke-width="1.800"/></svg><input type="text" placeholder="Type to locate (Ctrl+K)" aria-label="Type to locate"></div>
    <output class="message">1 legend entries remc</output>
    <label for="coord">Coordinate</label>
    <input id="coord" class="coord" type="text" value="0.918,0.011">
    <button class="extents" aria-label="Toggle extents"><svg viewBox="0 0 16 16"><path d="M1 3c2-3 4-1 5 1l2 2 3 1 2 5c-1 3-4 4-6 2L3 9z" fill="#555" stroke="#222"/><path d="M2 6l5-4M4 9l5-4M6 12l5-4" stroke="#eee" stroke-width="1.200"/><circle cx="10.500" cy="11.500" r="2.300" fill="#eee" stroke="#222"/><path d="M10 3l3-2M12 5l3-2M1 12l3 2" stroke="#444"/></svg></button>
    <label for="scale">Scale</label>
    <div class="combo"><select id="scale"><option>1:2731308</option></select><svg><use href="#chev"/></svg></div>
    <button class="lock" aria-label="Lock scale"><svg viewBox="0 0 14 16"><path d="M3.500 8V4.500c0-4 7-4 7 0V8" fill="none" stroke="#777" stroke-width="1.700"/><rect x="1" y="7" width="12" height="8" rx="1" fill="#555"/><path d="M2 9.500h10M2 12h10" stroke="#777"/></svg></button>
    <label for="mag">Magnifier</label>
    <div class="spin mag"><input id="mag" type="text" value="100%"><div><button aria-label="Increase magnifier"><svg class="up"><use href="#tri"/></svg></button><button aria-label="Decrease magnifier"><svg><use href="#tri"/></svg></button></div></div>
    <label for="rot">Rotation</label>
    <div class="spin rot"><input id="rot" type="text" value="0.0 °"><div><button aria-label="Increase rotation"><svg class="up"><use href="#tri"/></svg></button><button aria-label="Decrease rotation"><svg><use href="#tri"/></svg></button></div></div>
    <label class="render"><input type="checkbox" class="check" checked>Render</label>
    <button class="crs"><svg viewBox="0 0 16 16"><circle cx="8" cy="8" r="6.500" fill="#777"/><path d="M1.500 5h13M2 11h12M8 1v14M5 2c-2 4-2 8 0 12M11 2c2 4 2 8 0 12" fill="none" stroke="#ccc" stroke-width=".8"/><path d="M0 8h16" stroke="#777" stroke-width="1.500"/></svg>EPSG:4326</button>
    <button class="log" aria-label="Messages"><svg viewBox="0 0 16 16"><path d="M8 1c9 0 9 10.500 2 10.500L13 15.500 7 12C-2 12-2 1 8 1z" fill="#555"/><path d="M3.500 6.500h2M7 6.500h2M10.500 6.500h2" stroke="#f0f0f0" stroke-width="2"/></svg></button>
    <svg class="grip" viewBox="0 0 10 10"><path d="M7 0h2v2H7zM4 4h2v2H4zM7 4h2v2H7zM0 8h2v2H0zM4 8h2v2H4zM7 8h2v2H7z" fill="#bbb"/></svg>
  </footer>
</div>
</body>
</html>
```
FILE: styles.css
```css
* { box-sizing: border-box; }
body {
  margin: 0;
  background: #a9d3f2;
  color: #000;
  font: 11px/14px "DejaVu Sans Condensed", "Noto Sans", sans-serif;
}
.sprite { position: absolute; width: 0; height: 0; }
svg { display: block; flex: none; }
h1, h2, ul { margin: 0; padding: 0; font: inherit; list-style: none; }
button, input, select { font: inherit; color: inherit; }
button {
  display: flex;
  align-items: center;
  justify-content: center;
  padding: 0;
  border: 0;
  background: none;
}
.window {
  display: flex;
  flex-direction: column;
  height: calc(100vh - 1px);
  background: #f0f0f0;
  border-right: 1px solid #3d7fbe;
  border-bottom: 1px solid #2f7cc4;
}

/* title and menu */
.titlebar {
  display: flex;
  align-items: center;
  height: 29px;
  padding-left: 8px;
  gap: 5px;
  background: #fff;
}
.titlebar h1 { flex: 1; font: 12px/16px Roboto, sans-serif; }
.logo { width: 16px; height: 16px; }
.winbtns { display: flex; }
.winbtns button { width: 46px; height: 29px; }
.winbtns svg { width: 12px; height: 12px; }
.menubar {
  display: flex;
  align-items: flex-end;
  gap: 15px;
  height: 19px;
  padding-left: 7px;
  background: #fff;
}
.menubar button { height: 17px; white-space: nowrap; }

/* toolbars */
.toolrow {
  display: flex;
  height: 35px;
  border-bottom: 1px solid #b5b5b5;
  background: #f0f0f0;
}
.group {
  display: flex;
  align-items: center;
  padding-right: 1px;
  border-right: 1px solid #a8a8a8;
}
.group.tight { padding-right: 0; }
.group.last { border: 0; }
.group::before {
  content: "";
  width: 2px;
  height: 27px;
  margin: 0 4px;
  background: repeating-linear-gradient(#b4b4b4 0 2px, transparent 2px 4px);
}
.group button { width: 31px; height: 30px; gap: 4px; }
.group button.wide { width: 43px; }
.group svg { width: 24px; height: 24px; }
.group svg.tri, .tri { width: 7px; height: 4px; color: #222; }
.group button:disabled .tri { color: #777; }
.group .on { background: #bcdcf4; border: 1px solid #90c8f6; }
.group .hover { background: #d8e9f6; border: 1px solid #c3def5; }
.off { filter: grayscale(1); opacity: .55; }
.flip { transform: scaleX(-1); }
.tag-shape { fill: var(--tag); stroke: var(--edge); }
.tag-text { font: bold 8px "DejaVu Sans Condensed", sans-serif; fill: var(--ink); }
.yellow { --tag: #f8de45; --edge: #bb9a20; --ink: #222; }
.gray { --tag: #dedede; --edge: #b0b0b0; --ink: #888; color: #8c8c8c; }
.red { color: #c2272d; }
.ratio { font: bold 8px "Liberation Sans", sans-serif; fill: #777; }
.note { font: bold 14px "Liberation Serif", serif; fill: #333; }
.help { font: 15px "Liberation Serif", serif; fill: #fff; }

/* docks */
.work { display: flex; flex: 1; min-height: 0; gap: 4px; }
.docks { display: flex; flex-direction: column; width: 294px; gap: 5px; }
.dock { display: flex; flex-direction: column; }
.browser { height: 259px; }
.layers { flex: 1; min-height: 0; }
.dock-title {
  display: flex;
  align-items: center;
  height: 19px;
  padding: 0 4px 0 3px;
  gap: 7px;
  background: #d9d9d9;
  border: 1px solid #c0c0b4;
  border-left: 0;
}
.dock-title h2 { flex: 1; padding-top: 4px; }
.dock-title svg { width: 9px; height: 9px; }
.dock-tools { display: flex; align-items: center; height: 29px; padding-left: 5px; gap: 7px; }
.dock-tools svg { width: 16px; height: 16px; }
.dock-tools .wide { gap: 5px; }
.dock-tools svg.tri { width: 7px; height: 4px; }
.frame { flex: 1; min-height: 0; background: #fff; border: 1px solid #828790; }
.tree { display: flex; overflow: hidden; }
.tree ul { flex: 1; }
.tree li { display: flex; align-items: center; height: 20px; margin-left: 101px; padding-left: 2px; gap: 5px; }
.tree li svg { width: 16px; height: 16px; }
.tree li svg + span { padding-top: 2px; }
.tree li svg.fold { width: 14px; }
.tree li svg.chev { width: 10px; height: 6px; margin-right: 5px; color: #333; }
.tree li svg.closed { transform: rotate(-90deg); color: #999; }
.tree li.root { margin-left: 62px; }
.tree li.sub { margin-left: 82px; }
.tree li.selected { width: 110px; background: #cce8ff; border: 1px dotted #222; padding-left: 1px; }
.selected svg { filter: sepia(1) hue-rotate(170deg) saturate(2.5) brightness(.85); }
.scrollbar {
  display: flex;
  flex-direction: column;
  align-items: center;
  width: 16px;
  padding: 6px 0;
  background: #f0f0f0;
  color: #444;
}
.scrollbar svg { width: 10px; height: 6px; }
.up { transform: rotate(180deg); }
.scrollbar i { width: 15px; height: 23px; margin: 32px 0 auto; background: #cdcdcd; }
.layer { display: flex; align-items: center; height: 20px; margin-left: 21px; padding-left: 2px; background: #d9d9d9; }
.layer i { width: 16px; height: 1px; margin: 0 6px; background: #a3a39a; }
.layer span { padding-top: 2px; font-weight: bold; text-decoration: underline; }
.check {
  appearance: none;
  width: 13px;
  height: 13px;
  margin: 0;
  border: 1px solid #333;
  background: #fff;
  display: grid;
  place-items: center;
}
.check:checked::after {
  content: "";
  width: 8px;
  height: 4px;
  margin-bottom: 3px;
  border: solid #333;
  border-width: 0 0 1px 1px;
  transform: rotate(-45deg);
}

/* map */
.canvas { flex: 1; background: #fff; border: 1px solid #828790; border-width: 1px 0 1px 1px; margin-top: -1px; }
.canvas svg { width: 100%; height: 100%; }
.features { fill: none; }
.edge { stroke: #d5b94e; }
.cross { stroke: #e0c878; }

/* status bar */
.status { display: flex; align-items: center; height: 28px; padding: 2px 2px 0 4px; white-space: nowrap; }
.status > label, .message, .crs { padding-top: 1px; }
.status input[type=text], .status select { height: 20px; border: 1px solid #7a7a7a; background: #fff; border-radius: 0; outline: 0; padding: 1px 3px 0; }
.locate { display: flex; align-items: center; width: 200px; height: 20px; padding-left: 8px; border: 1px solid #7a7a7a; background: #fff; }
.locate svg { width: 13px; height: 13px; }
.status .locate input { flex: 1; min-width: 0; height: 18px; border: 0; padding: 1px 6px 0; }
.locate input::placeholder { color: #808080; }
.message { flex: 1; min-width: 0; margin: 0 8px; overflow: hidden; }
.coord { width: 70px; margin-left: 4px; }
.extents { margin: 0 12px 0 3px; }
.extents svg, .crs svg, .log svg { width: 16px; height: 16px; }
.combo { display: grid; width: 77px; margin: 0 5px 0 4px; }
.combo > * { grid-area: 1 / 1; }
.combo select { appearance: none; width: 100%; }
.combo svg { width: 9px; height: 6px; place-self: center end; margin-right: 4px; color: #555; pointer-events: none; }
.lock { margin-right: 9px; }
.lock svg { width: 14px; height: 16px; }
.spin { display: flex; height: 20px; border: 1px solid #7a7a7a; background: #fff; margin: 0 8px 0 4px; }
.status .spin input { flex: 1; min-width: 0; height: 18px; border: 0; padding: 1px 2px 0; }
.spin > div { display: flex; flex-direction: column; width: 14px; padding: 1px 1px 1px 0; }
.spin button { flex: 1; background: #f0f0f0; border: 1px solid #aaa; }
.spin svg { width: 7px; height: 4px; }
.mag { width: 82px; }
.rot { width: 81px; margin: 0 6px 0 9px; }
.render { display: flex; align-items: center; gap: 4px; }
.crs { gap: 3px; margin-left: 17px; }
.log { margin: 0 14px 0 16px; }
.grip { width: 10px; height: 10px; align-self: flex-end; margin-bottom: 2px; }
```
